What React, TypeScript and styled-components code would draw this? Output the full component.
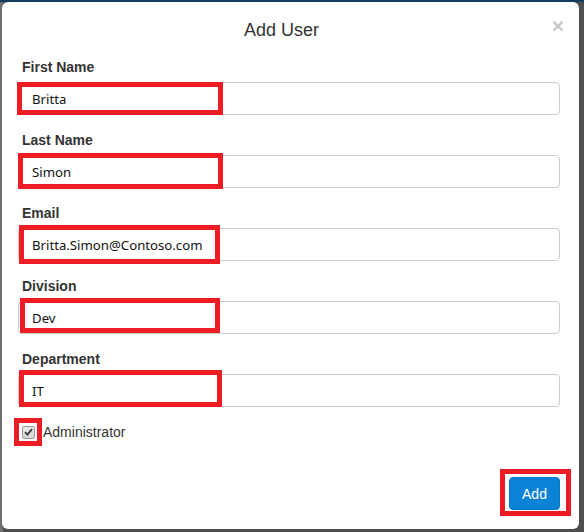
import React from "react";
import styled, { createGlobalStyle } from "styled-components";

const GlobalStyle = createGlobalStyle`
  html, body {
    margin: 0;
    padding: 0;
    background: #5e5e5e;
  }
  * {
    box-sizing: border-box;
  }
`;

interface IMark {
  left: number;
  top: number;
  w: number;
  h: number;
}

interface IField {
  label: string;
  value: string;
  mark: IMark;
}

const fields: IField[] = [
  { label: "First Name", value: "Britta", mark: { left: -1, top: 0, w: 206, h: 33 } },
  { label: "Last Name", value: "Simon", mark: { left: 0, top: -2, w: 205, h: 36 } },
  { label: "Email", value: "Britta.Simon@Contoso.com", mark: { left: 1, top: -3, w: 201, h: 39 } },
  { label: "Division", value: "Dev", mark: { left: 2, top: -3, w: 200, h: 35 } },
  { label: "Department", value: "IT", mark: { left: 1, top: -4, w: 203, h: 37 } },
];

export default function App() {
  return (
    <>
      <GlobalStyle />
      <Backdrop>
        <Modal>
          <Header>
            <Title>Add User</Title>
            <Close type="button" aria-label="Close">
              ×
            </Close>
          </Header>
          <Body>
            {fields.map((field) => (
              <FormGroup key={field.label}>
                <Label>{field.label}</Label>
                <InputWrap>
                  <Input type="text" defaultValue={field.value} />
                  <Highlight {...field.mark} />
                </InputWrap>
              </FormGroup>
            ))}
            <CheckRow>
              <CheckWrap>
                <CheckBox>
                  <svg width="9" height="8" viewBox="0 0 9 8">
                    <path
                      d="M1 4.2 L3.4 6.6 L8 1.2"
                      fill="none"
                      stroke="#3a3a3a"
                      strokeWidth="1.8"
                    />
                  </svg>
                </CheckBox>
                <Highlight left={-8} top={-8} w={28} h={28} />
              </CheckWrap>
              <CheckText>Administrator</CheckText>
            </CheckRow>
          </Body>
          <Footer>
            <ButtonWrap>
              <AddButton type="button">Add</AddButton>
              <Highlight left={-9} top={-8} w={71} h={47} />
            </ButtonWrap>
          </Footer>
        </Modal>
      </Backdrop>
    </>
  );
}

const Backdrop = styled.div`
  width: 584px;
  height: 532px;
  display: flex;
  padding: 0 5px 3px 2px;
  border-top: 2px solid #103d5e;
  background: linear-gradient(to right, #6e6e6e 0, #6e6e6e 3px, #4e4e4e 3px);
`;

const Modal = styled.div`
  flex: 1;
  display: flex;
  flex-direction: column;
  background: #ffffff;
  border-radius: 6px;
  font-family: "Liberation Sans", Arial, sans-serif;
  color: #333333;
`;

const Header = styled.div`
  display: flex;
  align-items: flex-start;
  padding: 15px 15px 0 15px;
`;

const Title = styled.h4`
  flex: 1;
  margin: 0;
  text-align: center;
  font-size: 18px;
  font-weight: normal;
  line-height: 26px;
  color: #333333;
`;

const Close = styled.button`
  border: 0;
  background: transparent;
  padding: 0;
  margin-top: -4px;
  width: 18px;
  text-align: right;
  font-family: "Liberation Sans", Arial, sans-serif;
  font-size: 21px;
  font-weight: bold;
  line-height: 26px;
  color: #c8c8c8;
  cursor: pointer;
`;

const Body = styled.div`
  padding: 14px 19px 0 16px;
`;

const FormGroup = styled.div`
  margin-bottom: 15px;
  &:last-of-type {
    margin-bottom: 0;
  }
`;

const Label = styled.label`
  display: block;
  margin: 0 0 5px 4px;
  font-size: 14px;
  font-weight: bold;
  line-height: 20px;
  color: #333333;
`;

const InputWrap = styled.div`
  position: relative;
`;

const Input = styled.input`
  display: block;
  width: 100%;
  height: 33px;
  padding: 0 12px 0 13px;
  border: 1px solid #cccccc;
  border-radius: 4px;
  background: #ffffff;
  font-family: "Noto Sans", "Segoe UI", sans-serif;
  font-size: 13.2px;
  color: #111111;
  outline: none;
`;

const Highlight = styled.span<IMark>`
  position: absolute;
  left: ${({ left }) => left}px;
  top: ${({ top }) => top}px;
  width: ${({ w }) => w}px;
  height: ${({ h }) => h}px;
  border: 5px solid #ed1c24;
  pointer-events: none;
`;

const CheckRow = styled.div`
  display: flex;
  align-items: center;
  gap: 8px;
  margin-top: 15px;
  padding-left: 4px;
  height: 20px;
`;

const CheckWrap = styled.span`
  position: relative;
  display: inline-flex;
`;

const CheckBox = styled.span`
  width: 13px;
  height: 13px;
  display: inline-flex;
  align-items: center;
  justify-content: center;
  border: 1px solid #9a9a9a;
  border-radius: 2px;
  background: linear-gradient(#ececec, #d4d4d4);
`;

const CheckText = styled.span`
  font-size: 14px;
  line-height: 20px;
  color: #333333;
`;

const Footer = styled.div`
  margin-top: auto;
  display: flex;
  justify-content: flex-end;
  padding: 0 19px 19px 0;
`;

const ButtonWrap = styled.div`
  position: relative;
  display: inline-flex;
`;

const AddButton = styled.button`
  width: 51px;
  height: 33px;
  border: 1px solid #0a78c8;
  border-radius: 4px;
  background: #0a82d6;
  color: #ffffff;
  font-family: "Liberation Sans", Arial, sans-serif;
  font-size: 14px;
  cursor: pointer;
`;
